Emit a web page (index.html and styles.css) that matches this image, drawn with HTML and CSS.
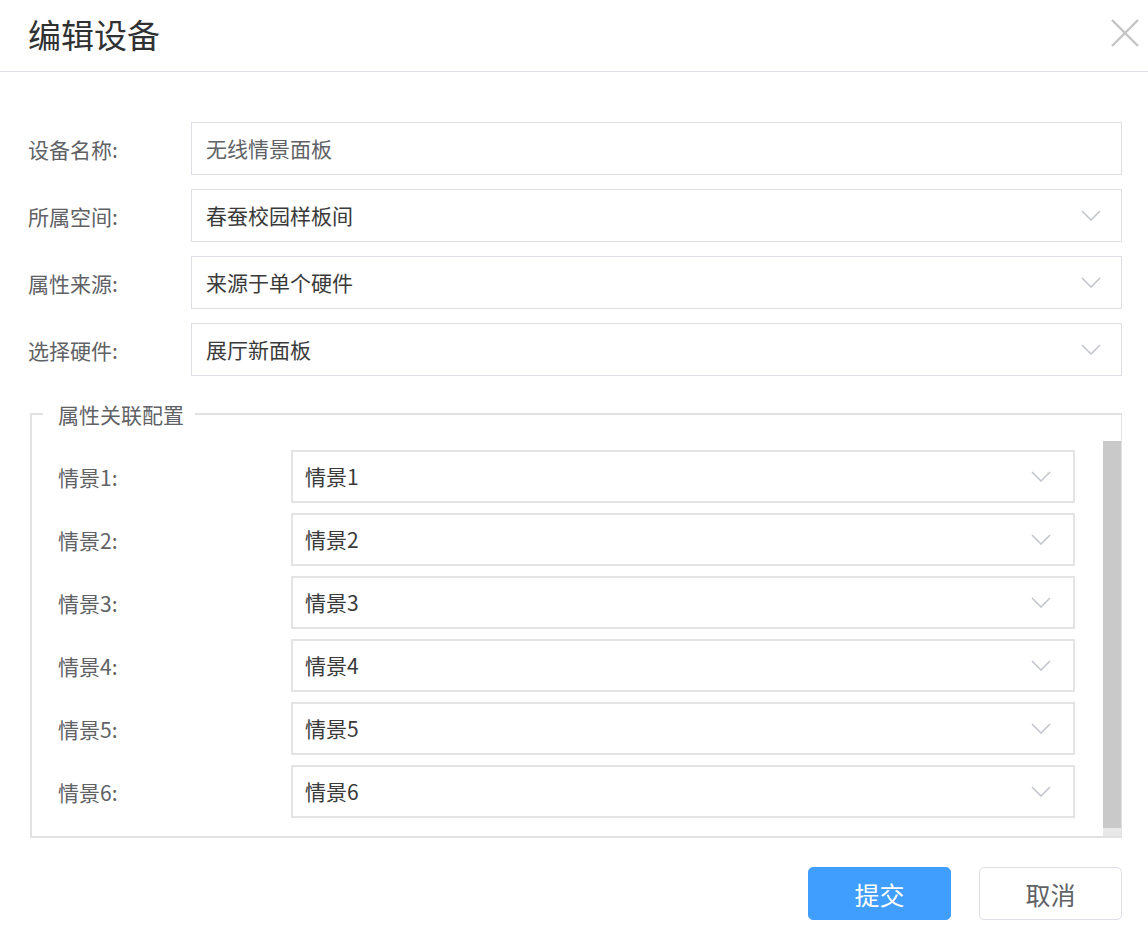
FILE: index.html
```html
<!DOCTYPE html>
<html lang="zh-CN">
<head>
<meta charset="utf-8">
<title>编辑设备</title>
<link rel="stylesheet" href="styles.css">
</head>
<body>
<div class="dialog">
  <div class="header">
    <h1 class="title">编辑设备</h1>
    <button class="close" aria-label="关闭">
      <svg width="28" height="28" viewBox="0 0 28 28"><path d="M1 1L27 27M27 1L1 27" stroke="#c4c4c4" stroke-width="2.4" fill="none"/></svg>
    </button>
  </div>
  <div class="body">
    <div class="row">
      <label class="label">设备名称:</label>
      <div class="input"><span class="value light">无线情景面板</span></div>
    </div>
    <div class="row">
      <label class="label">所属空间:</label>
      <div class="input select"><span class="value">春蚕校园样板间</span><svg class="arrow" width="20" height="11" viewBox="0 0 20 11"><path d="M1 1L10 10L19 1" stroke="#c0c4cc" stroke-width="1.5" fill="none"/></svg></div>
    </div>
    <div class="row">
      <label class="label">属性来源:</label>
      <div class="input select"><span class="value">来源于单个硬件</span><svg class="arrow" width="20" height="11" viewBox="0 0 20 11"><path d="M1 1L10 10L19 1" stroke="#c0c4cc" stroke-width="1.5" fill="none"/></svg></div>
    </div>
    <div class="row">
      <label class="label">选择硬件:</label>
      <div class="input select"><span class="value">展厅新面板</span><svg class="arrow" width="20" height="11" viewBox="0 0 20 11"><path d="M1 1L10 10L19 1" stroke="#c0c4cc" stroke-width="1.5" fill="none"/></svg></div>
    </div>

    <fieldset class="group">
      <legend class="legend">属性关联配置</legend>
      <div class="scroll">
        <div class="scroll-content">
          <div class="irow"><span class="ilabel">情景1:</span><div class="ibox"><span class="value">情景1</span><svg class="arrow" width="20" height="11" viewBox="0 0 20 11"><path d="M1 1L10 10L19 1" stroke="#c0c4cc" stroke-width="1.5" fill="none"/></svg></div></div>
          <div class="irow"><span class="ilabel">情景2:</span><div class="ibox"><span class="value">情景2</span><svg class="arrow" width="20" height="11" viewBox="0 0 20 11"><path d="M1 1L10 10L19 1" stroke="#c0c4cc" stroke-width="1.5" fill="none"/></svg></div></div>
          <div class="irow"><span class="ilabel">情景3:</span><div class="ibox"><span class="value">情景3</span><svg class="arrow" width="20" height="11" viewBox="0 0 20 11"><path d="M1 1L10 10L19 1" stroke="#c0c4cc" stroke-width="1.5" fill="none"/></svg></div></div>
          <div class="irow"><span class="ilabel">情景4:</span><div class="ibox"><span class="value">情景4</span><svg class="arrow" width="20" height="11" viewBox="0 0 20 11"><path d="M1 1L10 10L19 1" stroke="#c0c4cc" stroke-width="1.5" fill="none"/></svg></div></div>
          <div class="irow"><span class="ilabel">情景5:</span><div class="ibox"><span class="value">情景5</span><svg class="arrow" width="20" height="11" viewBox="0 0 20 11"><path d="M1 1L10 10L19 1" stroke="#c0c4cc" stroke-width="1.5" fill="none"/></svg></div></div>
          <div class="irow"><span class="ilabel">情景6:</span><div class="ibox"><span class="value">情景6</span><svg class="arrow" width="20" height="11" viewBox="0 0 20 11"><path d="M1 1L10 10L19 1" stroke="#c0c4cc" stroke-width="1.5" fill="none"/></svg></div></div>
        </div>
        <div class="scrollbar"><div class="thumb"></div></div>
      </div>
    </fieldset>

    <div class="footer">
      <button class="btn primary">提交</button>
      <button class="btn">取消</button>
    </div>
  </div>
</div>
</body>
</html>
```

FILE: styles.css
```css
* { box-sizing: border-box; }
html, body { margin: 0; padding: 0; background: #fff; }
body {
  font-family: "Noto Sans CJK SC", "Noto Sans", sans-serif;
  color: #606266;
  width: 1148px;
  height: 941px;
  overflow: hidden;
}
.header {
  height: 72px;
  border-bottom: 1.5px solid #dcdfe6;
  display: flex;
  align-items: center;
  justify-content: space-between;
  padding: 0 8px 0 28px;
}
.title {
  margin: 0;
  font-size: 33px;
  font-weight: 400;
  color: #303133;
  line-height: 40px;
  margin-top: -4px;
}
.close {
  border: 0;
  background: transparent;
  padding: 0;
  width: 30px;
  height: 30px;
  display: flex;
  align-items: center;
  justify-content: center;
  margin-top: -6px;
}
.body {
  padding: 50px 26px 0 28px;
}
.row {
  display: flex;
  align-items: center;
  height: 53px;
  margin-bottom: 14px;
}
.label {
  width: 163px;
  flex: none;
  font-size: 21px;
  color: #606266;
}
.input {
  flex: 1;
  height: 53px;
  border: 1.5px solid #dcdfe6;
  display: flex;
  align-items: center;
  justify-content: space-between;
  padding: 0 20px 0 14px;
}
.value {
  font-size: 21px;
  color: #3a3a3a;
  line-height: 1;
}
.value.light { color: #606266; }
.arrow { display: block; flex: none; }
.group {
  margin: 23px 0 0 2px;
  padding: 12px 0 0 0;
  border: 2px solid #e2e2e2;
  border-right-width: 1px;
  min-width: 0;
}
.legend {
  font-size: 21px;
  line-height: 30px;
  color: #606266;
  margin-left: 11px;
  padding: 0 11px 0 15px;
}
.scroll {
  display: flex;
  height: 395px;
}
.scroll-content {
  flex: 1;
  min-width: 0;
  overflow: hidden;
  padding: 9px 28px 0 26px;
}
.scrollbar {
  width: 18px;
  flex: none;
  background: #e8e8e8;
  display: flex;
  flex-direction: column;
}
.thumb {
  height: 387px;
  background: #c9c9c9;
}
.irow {
  display: flex;
  align-items: center;
  height: 53px;
  margin-bottom: 10px;
}
.irow:last-child { margin-bottom: 0; }
.ilabel {
  width: 233px;
  flex: none;
  font-size: 21px;
  color: #606266;
}
.ibox {
  flex: 1;
  height: 53px;
  border: 2px solid #e4e4e4;
  display: flex;
  align-items: center;
  justify-content: space-between;
  padding: 0 22px 0 12px;
}
.footer {
  display: flex;
  justify-content: flex-end;
  gap: 28px;
  margin-top: 29px;
}
.btn {
  width: 143px;
  height: 53px;
  border-radius: 5px;
  border: 1.5px solid #dcdfe6;
  background: #fff;
  color: #606266;
  font-family: "Noto Sans CJK SC", "Noto Sans", sans-serif;
  font-size: 25px;
  padding: 0;
}
.btn.primary {
  background: #409eff;
  border-color: #409eff;
  color: #fff;
}
```
